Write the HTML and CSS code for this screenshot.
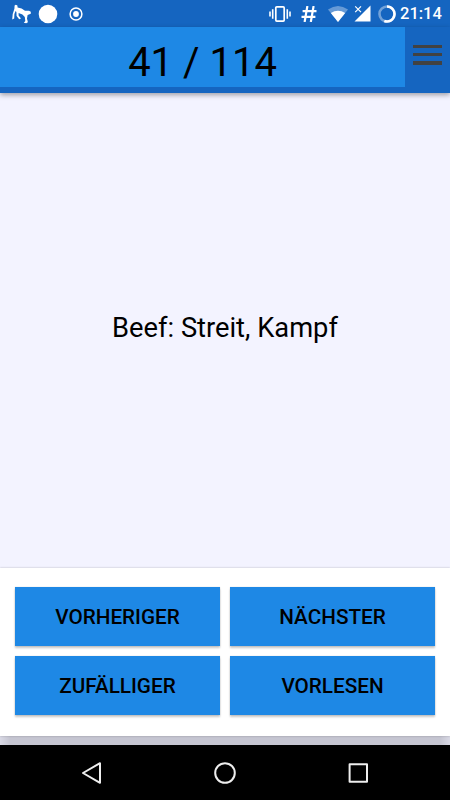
FILE: index.html
```html
<!DOCTYPE html>
<html lang="de">
<head>
    <meta charset="UTF-8">
    <title>Beef: Streit, Kampf</title>
    <link rel="stylesheet" href="styles.css">
</head>
<body>
<div class="screen">
    <div class="status">
        <svg class="ico-dog" width="20" height="20" viewBox="0 0 20 20">
            <path d="M2.6 1.6 L3.8 .8 L5.4 1.6 L5.6 3.4 L9.6 4.4 L13 6.8 L17 6.8 L18.8 7.8 L18.8 9.8 L15.6 11 L15 14.5 L15.9 18.2 L14.2 19.2 L11.8 18.8 L13.3 17 L12.8 13 L10.4 10.6 L6.6 9 L6.6 11.5 L9 14.4 L7.2 15.3 L4.6 12 L4.4 8 L3.6 7 L2.4 10 L2.2 14.6 L.2 15.6 L.7 10 L2.4 4.8 Z" fill="#fff"/>
        </svg>
        <svg class="ico-dot" width="20" height="20" viewBox="0 0 20 20">
            <circle cx="10" cy="10" r="9.3" fill="#fff"/>
        </svg>
        <svg class="ico-target" width="14" height="14" viewBox="0 0 14 14">
            <circle cx="7" cy="7" r="5.9" fill="none" stroke="#fff" stroke-width="1.5"/>
            <circle cx="7" cy="7" r="2.9" fill="#fff"/>
        </svg>
        <div class="status-right">
            <svg class="ico-vibrate" width="22" height="16" viewBox="0 0 22 16">
                <rect x="6.8" y=".9" width="8.4" height="14.2" rx="1" fill="none" stroke="#fff" stroke-width="1.7"/>
                <path d="M3.7 3.2v9.6M18.3 3.2v9.6M1 5.4v5.2M21 5.4v5.2" fill="none" stroke="#fff" stroke-width="1.6"/>
            </svg>
            <svg class="ico-hash" width="16" height="16" viewBox="0 0 16 16">
                <path d="M6.4 0L3.6 16M12.6 0L9.8 16M1.6 5.1H15.5M.5 10.8H14.4" fill="none" stroke="#fff" stroke-width="2.2"/>
            </svg>
            <svg class="ico-wifi" width="20" height="16" viewBox="0 0 20 16">
                <path d="M0 3.6Q10-3.4 20 3.6L10 16Z" fill="#fff" opacity=".35"/>
                <path d="M2.8 7Q10 2.4 17.2 7L10 16Z" fill="#fff"/>
            </svg>
            <svg class="ico-signal" width="17" height="17" viewBox="0 0 17 17">
                <path d="M16.5 .5V16.5H.5Z" fill="#fff"/>
                <path d="M0 0H8V8H0Z" fill="#1565c0"/>
                <path d="M1.2 1.3L7 7.2M7 1.3L1.2 7.2" fill="none" stroke="#fff" stroke-width="1.2"/>
            </svg>
            <svg class="ico-battery" width="18" height="18" viewBox="0 0 18 18">
                <circle cx="9" cy="9" r="7.5" fill="none" stroke="#fff" stroke-width="2.6" opacity=".4"/>
                <path d="M9 1.5A7.5 7.5 0 1 1 6.3 16" fill="none" stroke="#fff" stroke-width="2.6"/>
            </svg>
            <span class="clock">21:14</span>
        </div>
    </div>
    <div class="header">
        <div class="counter">41 / 114</div>
        <div class="menu">
            <i></i>
            <i></i>
            <i></i>
        </div>
    </div>
    <div class="content">
        <p>Beef: Streit, Kampf</p>
    </div>
    <div class="panel">
        <button class="btn">VORHERIGER</button>
        <button class="btn">NÄCHSTER</button>
        <button class="btn">ZUFÄLLIGER</button>
        <button class="btn">VORLESEN</button>
    </div>
    <div class="nav">
        <svg width="22" height="24" viewBox="0 0 22 24">
            <path d="M19 2.2V21.8L2 12Z" fill="none" stroke="#eee" stroke-width="2" stroke-linejoin="round"/>
        </svg>
        <svg width="22" height="24" viewBox="0 0 22 24">
            <circle cx="11" cy="12" r="9.8" fill="none" stroke="#eee" stroke-width="2"/>
        </svg>
        <svg width="22" height="24" viewBox="0 0 22 24">
            <rect x="2.6" y="3.2" width="17.4" height="17.6" fill="none" stroke="#eee" stroke-width="2" stroke-linejoin="round"/>
        </svg>
    </div>
</div>
</body>
</html>
```
FILE: styles.css
```css
@charset "UTF-8";
/* reset */
body,p,button{margin:0;padding:0}
body,button{font-family:Roboto,"Liberation Sans",sans-serif;color:#000;}
svg{display:block;flex:none;}

.screen{
    width:450px;
    height:800px;
    display:flex;
    flex-direction:column;
    overflow:hidden;
    background:linear-gradient(to right,#d9d9e5 0,#c5c5d1 10px,#c5c5d1 440px,#d9d9e5 450px);
}

/* status bar */
.status{
    height:27px;
    flex:none;
    display:flex;
    align-items:center;
    box-sizing:border-box;
    padding:0 8px 0 12px;
    background:#1565c0;
}
.ico-dot{
    margin-left:6px;
}
.ico-target{
    margin-left:11px;
}
.status-right{
    display:flex;
    align-items:center;
    margin-left:auto;
}
.ico-hash{
    margin-left:10px;
}
.ico-wifi{
    margin-left:11px;
}
.ico-signal{
    margin-left:6px;
}
.ico-battery{
    margin-left:7px;
}
.clock{
    width:42px;
    margin-left:4px;
    font-size:16.5px;
    line-height:29px;
    font-weight:500;
    color:#fff;
    white-space:nowrap;
}

/* header */
.header{
    position:relative;
    z-index:1;
    height:66px;
    flex:none;
    display:flex;
    background:#1565c0;
    box-shadow:0 2px 5px rgba(0,0,0,.35);
}
.counter{
    width:405px;
    height:60px;
    line-height:71px;
    font-size:40px;
    text-align:center;
    background:#1e88e5;
}
.menu{
    display:flex;
    flex-direction:column;
    gap:5px;
    padding:18px 0 0 8px;
}
.menu i{
    width:29px;
    height:3px;
    background:#424242;
}
.menu i:last-child{
    height:4px;
}

.content{
    height:475px;
    flex:none;
    display:flex;
    align-items:center;
    justify-content:center;
    box-sizing:border-box;
    padding-bottom:5px;
    background:#f3f3ff;
}
.content p{
    font-size:27.3px;
    line-height:32px;
}

/* buttons */
.panel{
    position:relative;
    height:168px;
    flex:none;
    display:grid;
    grid-template-columns:1fr 1fr;
    grid-template-rows:59px 59px;
    gap:10px;
    box-sizing:border-box;
    padding:19px 15px 0;
    background:#fff;
    box-shadow:0 0 2px rgba(0,0,0,.25);
}
.btn{
    border:0;
    font-size:20.7px;
    font-weight:500;
    background:#1e88e5;
    box-shadow:0 2px 2px rgba(0,0,0,.22),0 0 1px rgba(0,0,0,.2);
}

/* navigation bar */
.nav{
    height:55px;
    flex:none;
    display:flex;
    align-items:center;
    justify-content:center;
    gap:111px;
    margin-top:9px;
    background:#000;
}
```
